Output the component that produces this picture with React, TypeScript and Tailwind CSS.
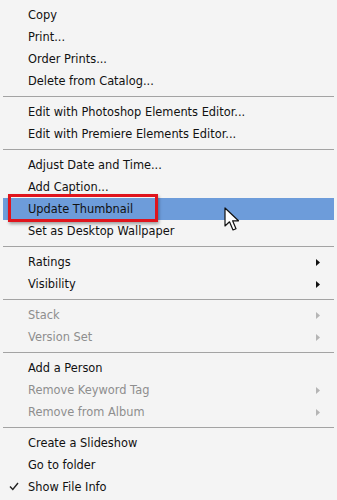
import React from "react";

type Item = {
  label: string;
  disabled?: boolean;
  submenu?: boolean;
  checked?: boolean;
  active?: boolean;
};

const groups: Item[][] = [
  [
    { label: "Copy" },
    { label: "Print..." },
    { label: "Order Prints..." },
    { label: "Delete from Catalog..." },
  ],
  [
    { label: "Edit with Photoshop Elements Editor..." },
    { label: "Edit with Premiere Elements Editor..." },
  ],
  [
    { label: "Adjust Date and Time..." },
    { label: "Add Caption..." },
    { label: "Update Thumbnail", active: true },
    { label: "Set as Desktop Wallpaper" },
  ],
  [
    { label: "Ratings", submenu: true },
    { label: "Visibility", submenu: true },
  ],
  [
    { label: "Stack", submenu: true, disabled: true },
    { label: "Version Set", submenu: true, disabled: true },
  ],
  [
    { label: "Add a Person" },
    { label: "Remove Keyword Tag", submenu: true, disabled: true },
    { label: "Remove from Album", submenu: true, disabled: true },
  ],
  [
    { label: "Create a Slideshow" },
    { label: "Go to folder" },
    { label: "Show File Info", checked: true },
  ],
];

const MenuRow = ({ item }: { item: Item }) => (
  <div
    className={
      "relative flex items-center h-[22px] mx-[3px] pl-[25px] pr-[14px] " +
      (item.active ? "bg-[#6d9cda] " : "") +
      (item.disabled ? "text-[#8e8e8e]" : "text-[#111]")
    }
  >
    {item.checked && (
      <svg
        className="absolute left-[6px] top-[6px]"
        width="10"
        height="9"
        viewBox="0 0 10 9"
      >
        <path d="M1 4.5 L3.8 7.5 L9 1" fill="none" stroke="#222" strokeWidth="1.4" />
      </svg>
    )}
    {item.active && (
      // red highlight box around the hovered item
      <div className="absolute left-[5px] top-[-4px] w-[150px] h-[28px] border-[3px] border-[#e0141c] shadow-[1px_2px_3px_rgba(0,0,0,0.35)]" />
    )}
    <span className="flex-1 whitespace-nowrap pt-px">{item.label}</span>
    {item.submenu && (
      <svg width="4" height="7" viewBox="0 0 4 7">
        <path d="M0 0 L4 3.5 L0 7 Z" fill={item.disabled ? "#b5b5b5" : "#111"} />
      </svg>
    )}
  </div>
);

export default function App() {
  return (
    <div
      className="relative w-[337px] h-[500px] bg-[#f4f4f4] pt-[4px] text-[11.4px] overflow-hidden"
      style={{ fontFamily: '"DejaVu Sans", Verdana, sans-serif' }}
    >
      {groups.map((group, gi) => (
        <div key={gi}>
          {gi > 0 && (
            <div className="h-[9px] flex items-center mx-[3px]">
              <div className="w-full h-px bg-[#a3a3a3]" />
            </div>
          )}
          {group.map((item) => (
            <MenuRow key={item.label} item={item} />
          ))}
        </div>
      ))}

      {/* mouse pointer */}
      <svg
        className="absolute left-[224px] top-[207px]"
        width="18"
        height="26"
        viewBox="0 0 18 26"
      >
        <path
          d="M1 1 L1 19 L5.5 14.8 L9 23 L12 21.8 L8.6 13.8 L14.5 13.8 Z"
          fill="#fff"
          stroke="#111"
          strokeWidth="1.2"
          strokeLinejoin="round"
        />
      </svg>
    </div>
  );
}
